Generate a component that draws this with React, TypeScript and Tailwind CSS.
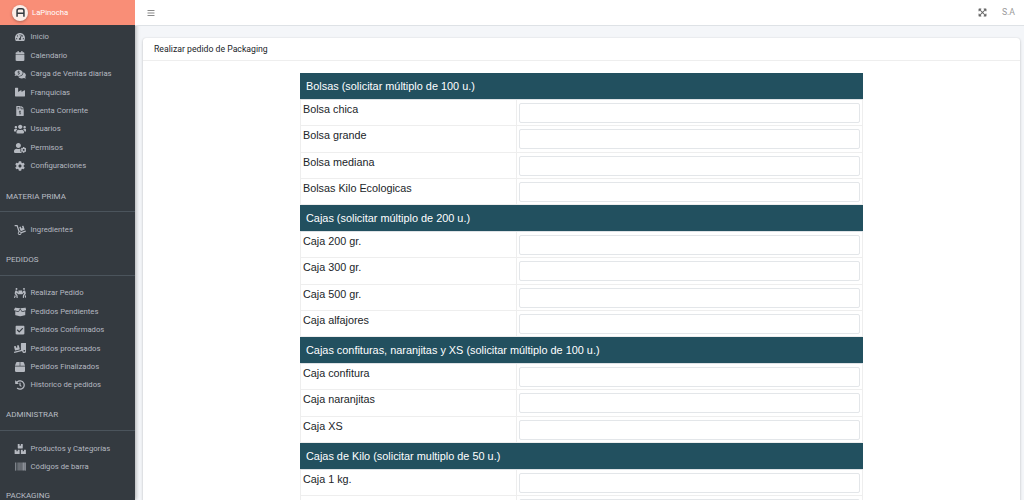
import type { ComponentType } from 'react';
import {
  FaTachometerAlt,
  FaCalendar,
  FaCommentsDollar,
  FaIndustry,
  FaFileInvoiceDollar,
  FaUsers,
  FaUserCog,
  FaCog,
  FaDolly,
  FaPeopleCarry,
  FaBoxOpen,
  FaCheckSquare,
  FaTruckLoading,
  FaBox,
  FaHistory,
  FaBoxes,
  FaBarcode,
  FaBars,
  FaExpandArrowsAlt,
} from 'react-icons/fa';

type Item = { label: string; icon: ComponentType<{ className?: string }>; size?: string };

const wide = 'h-[10px] w-[12.5px]';

const mainItems: Item[] = [
  { label: 'Inicio', icon: FaTachometerAlt },
  { label: 'Calendario', icon: FaCalendar },
  { label: 'Carga de Ventas diarias', icon: FaCommentsDollar, size: wide },
  { label: 'Franquicias', icon: FaIndustry },
  { label: 'Cuenta Corriente', icon: FaFileInvoiceDollar },
  { label: 'Usuarios', icon: FaUsers, size: wide },
  { label: 'Permisos', icon: FaUserCog, size: wide },
  { label: 'Configuraciones', icon: FaCog },
];

const sections: { title: string; items: Item[] }[] = [
  { title: 'MATERIA PRIMA', items: [{ label: 'Ingredientes', icon: FaDolly, size: wide }] },
  {
    title: 'PEDIDOS',
    items: [
      { label: 'Realizar Pedido', icon: FaPeopleCarry, size: wide },
      { label: 'Pedidos Pendientes', icon: FaBoxOpen, size: wide },
      { label: 'Pedidos Confirmados', icon: FaCheckSquare },
      { label: 'Pedidos procesados', icon: FaTruckLoading, size: wide },
      { label: 'Pedidos Finalizados', icon: FaBox },
      { label: 'Historico de pedidos', icon: FaHistory },
    ],
  },
  {
    title: 'ADMINISTRAR',
    items: [
      { label: 'Productos y Categorías', icon: FaBoxes, size: wide },
      { label: 'Códigos de barra', icon: FaBarcode, size: 'h-[11px] w-[11px]' },
    ],
  },
];

const groups = [
  { title: 'Bolsas (solicitar múltiplo de 100 u.)', rows: ['Bolsa chica', 'Bolsa grande', 'Bolsa mediana', 'Bolsas Kilo Ecologicas'] },
  { title: 'Cajas (solicitar múltiplo de 200 u.)', rows: ['Caja 200 gr.', 'Caja 300 gr.', 'Caja 500 gr.', 'Caja alfajores'] },
  { title: 'Cajas confituras, naranjitas y XS (solicitar múltiplo de 100 u.)', rows: ['Caja confitura', 'Caja naranjitas', 'Caja XS'] },
  { title: 'Cajas de Kilo (solicitar multiplo de 50 u.)', rows: ['Caja 1 kg.', ''] },
];

function NavItem({ item }: { item: Item }) {
  const Icon = item.icon;
  return (
    <div className="flex h-[18.4px] items-center text-[7.7px] text-[#b5b9c0]">
      <span className="ml-[14px] flex w-[12px] shrink-0 justify-center">
        <Icon className={`shrink-0 text-[10px] ${item.size ?? ''}`} />
      </span>
      <span className="ml-[4.5px] whitespace-nowrap">{item.label}</span>
    </div>
  );
}

export default function App() {
  return (
    <div className="flex h-[500px] w-[1024px] overflow-hidden bg-[#f4f6f9] font-['Roboto',sans-serif]">
      <aside className="flex w-[135px] shrink-0 flex-col overflow-hidden bg-[#343a40] shadow-[1px_0_4px_rgba(0,0,0,0.3)]">
        <div className="flex h-[25px] shrink-0 items-center bg-[#f98e77] pl-[12px] text-[7.7px] text-white">
          <span className="flex h-[16px] w-[16px] items-center justify-center rounded-full bg-[#fbeee9] shadow-[0_1px_3px_rgba(0,0,0,0.3)]">
            <svg viewBox="0 0 16 16" className="h-[11px] w-[11px]" fill="none" stroke="#343a40" strokeWidth="2.2">
              <path d="M3 14V5.5C3 3.5 4.5 2.5 6 2.5h4c1.5 0 3 1 3 3V14M3 9h10" />
            </svg>
          </span>
          <span className="ml-[4px]">LaPinocha</span>
        </div>
        <div className="shrink-0 pt-[3px] pb-[0.5px]">
          {mainItems.map((item) => (
            <NavItem key={item.label} item={item} />
          ))}
        </div>
        {sections.map((section) => (
          <div key={section.title} className="shrink-0">
            <div className="mt-[13px] flex h-[16px] items-center pl-[6px] text-[8px] text-[#b9bdc4]">{section.title}</div>
            <div className="mt-[6.5px] mb-[8.5px] h-px bg-[#4b545c]" />
            {section.items.map((item) => (
              <NavItem key={item.label} item={item} />
            ))}
          </div>
        ))}
        <div className="mt-[14px] flex h-[12px] shrink-0 items-center pl-[6px] text-[8px] text-[#b9bdc4]">PACKAGING</div>
      </aside>

      <div className="flex min-w-0 flex-1 flex-col">
        <header className="flex h-[26px] shrink-0 items-center justify-between border-b border-[#dee2e6] bg-white pl-[12px] pr-[9px] text-[#8a8a8a]">
          <FaBars className="text-[8px]" />
          <div className="flex items-center gap-[15px]">
            <FaExpandArrowsAlt className="text-[9px] text-[#666]" />
            <span className="text-[8.7px] text-[#999]">S.A</span>
          </div>
        </header>

        <main className="min-h-0 flex-1 pl-[8px] pr-[4px] pt-[12px]">
          <div className="rounded-t-[3px] bg-white shadow-[0_0_1px_rgba(0,0,0,0.125),0_1px_3px_rgba(0,0,0,0.2)]">
            <div className="flex h-[23px] items-center border-b border-[#eeeeee] pl-[11px] pt-[1px] text-[8.7px] text-[#212529]">
              Realizar pedido de Packaging
            </div>
            <div className="pt-[12px] pl-[157px] font-['Liberation_Sans',sans-serif]">
              <div className="w-[563px]">
                {groups.map((group) => (
                  <div key={group.title}>
                    <div className="flex h-[27px] items-center border-b border-[#dee2e6] bg-[#22505f] pl-[6px] text-[10.9px] text-white">
                      {group.title}
                    </div>
                    {group.rows.map((row, i) => (
                      <div key={i} className="flex h-[26.25px] border-b border-r border-l border-[#eeeeee] text-[10.8px] text-[#212529]">
                        <div className="w-[216px] border-r border-[#eeeeee] pl-[2px] pt-[1px]">{row}</div>
                        <div className="flex-1 px-[2px] pt-[3px]">
                          <input className="block h-[20px] w-full rounded-[2px] border border-[#e3e6e9] bg-white" />
                        </div>
                      </div>
                    ))}
                  </div>
                ))}
              </div>
            </div>
          </div>
        </main>
      </div>
    </div>
  );
}
